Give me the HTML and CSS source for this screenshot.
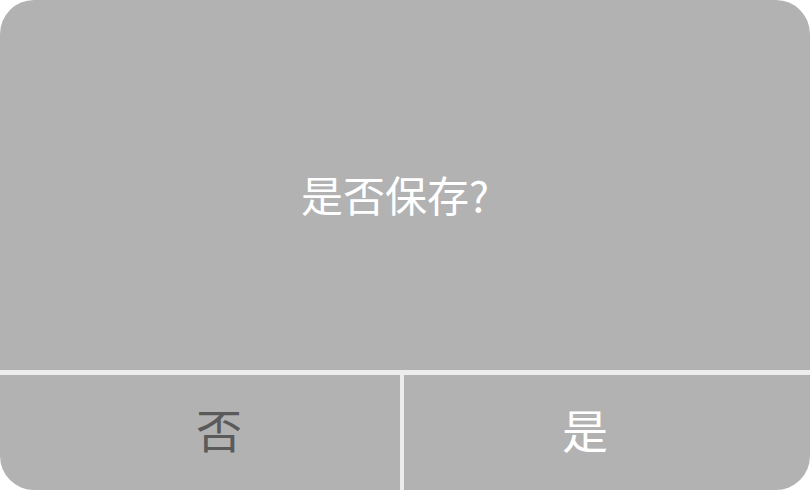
FILE: index.html
```html
<!DOCTYPE html>
<html lang="zh">
<head>
<meta charset="utf-8">
<link rel="stylesheet" href="styles.css">
</head>
<body>
<div class="dialog">
  <div class="message">是否保存?</div>
  <div class="divider-h"></div>
  <div class="actions">
    <div class="btn btn-no">否</div>
    <div class="divider-v"></div>
    <div class="btn btn-yes">是</div>
  </div>
</div>
</body>
</html>
```
FILE: styles.css
```css
html, body {
  margin: 0;
  padding: 0;
  background: #ffffff;
}
body {
  font-family: "Noto Sans CJK SC", "Noto Sans", sans-serif;
}
.dialog {
  width: 810px;
  height: 490px;
  background: #b2b2b2;
  border-radius: 34px;
  overflow: hidden;
  display: flex;
  flex-direction: column;
}
.message {
  height: 370px;
  display: flex;
  align-items: center;
  justify-content: center;
  box-sizing: border-box;
  padding-top: 18px;
  padding-right: 20px;
  color: #ffffff;
  font-size: 42px;
  line-height: 1;
}
.divider-h {
  height: 5px;
  background: #ececec;
}
.actions {
  flex: 1;
  display: flex;
}
.divider-v {
  width: 4px;
  background: #ececec;
}
.btn {
  display: flex;
  align-items: center;
  justify-content: center;
  font-size: 46px;
  line-height: 1;
  box-sizing: border-box;
  padding-bottom: 10px;
}
.btn-no {
  width: 400px;
  padding-left: 38px;
  color: #5a5a5a;
}
.btn-yes {
  flex: 1;
  padding-right: 44px;
  color: #ffffff;
}
```
